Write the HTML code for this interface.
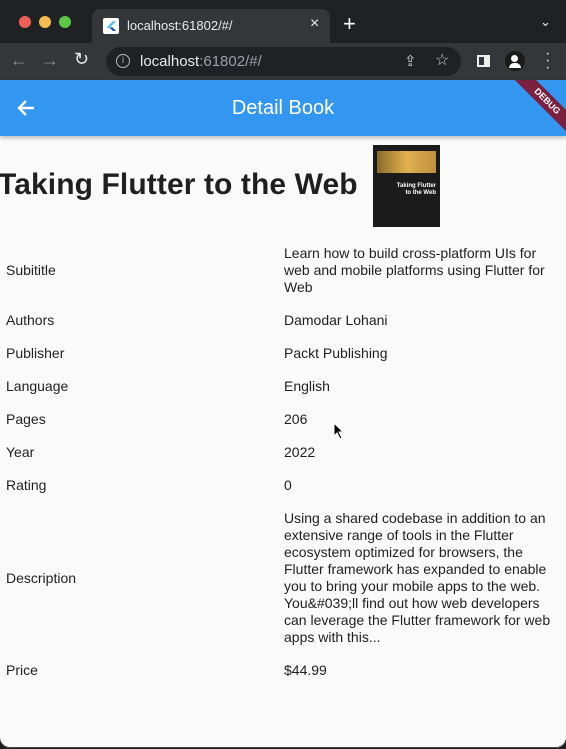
<!DOCTYPE html>
<html><head><meta charset="utf-8"><style>
*{margin:0;padding:0;box-sizing:border-box}
body{width:566px;height:749px;background:#1e1e1e;font-family:"Liberation Sans",sans-serif;position:relative;overflow:hidden}
.a{position:absolute}
.win{position:absolute;left:0;top:0;width:566px;height:748px;background:#fafafa;border-radius:0 0 10px 10px;overflow:hidden;box-shadow:inset 0 -1px 0 #444}
.t{position:absolute;font-size:14px;color:#1f1f1f;line-height:17px}
</style></head><body>
<div class="win">
<div class="a" style="left:0;top:0;width:566px;height:43px;background:#202124"></div>
<div class="a" style="left:19px;top:16px;width:12px;height:12px;border-radius:6px;background:#ee5f57"></div>
<div class="a" style="left:39px;top:16px;width:12px;height:12px;border-radius:6px;background:#f5bd4f"></div>
<div class="a" style="left:59px;top:16px;width:12px;height:12px;border-radius:6px;background:#5ec747"></div>
<div class="a" style="left:92px;top:9px;width:238px;height:36px;background:#35363a;border-radius:8px 8px 0 0"></div>
<div class="a" style="left:103px;top:18px;width:16px;height:16px;background:#fff;border-radius:2px"><svg width="16" height="16"><path d="M10 3L4 9l2 2 7-8z" fill="#4fc3f7"/><path d="M7 10l3 3h3l-4-4z" fill="#0d47a1"/></svg></div>
<div class="a" style="left:127px;top:18px;color:#e8eaed;font-size:13px">localhost:61802/#/</div>
<div class="a" style="left:310px;top:15px;color:#e8eaed;font-size:16px">×</div>
<div class="a" style="left:343px;top:11px;color:#fff;font-size:22px">+</div>
<div class="a" style="left:540px;top:14px;color:#e8eaed;font-size:13px">⌄</div>
<div class="a" style="left:0;top:43px;width:566px;height:37px;background:#35363a"></div>
<div class="a" style="left:10px;top:50px;color:#8a8b8d;font-size:18px">←</div>
<div class="a" style="left:41px;top:50px;color:#8a8b8d;font-size:18px">→</div>
<div class="a" style="left:74px;top:49px;color:#e8eaed;font-size:18px">↻</div>
<div class="a" style="left:106px;top:47px;width:355px;height:29px;background:#202124;border-radius:15px"></div>
<div class="a" style="left:116px;top:54px;width:14px;height:14px;border:1.5px solid #bbb;border-radius:7px;color:#bbb;font-size:9px;text-align:center;line-height:11px">i</div>
<div class="a" style="left:140px;top:53px;font-size:15px;color:#e8eaed">localhost<span style="color:#9aa0a6">:61802/#/</span></div>
<div class="a" style="left:404px;top:52px;color:#ccc;font-size:15px">⇪</div>
<div class="a" style="left:435px;top:50px;color:#ccc;font-size:16px">☆</div>
<div class="a" style="left:477px;top:55px;width:13px;height:12px;border:2px solid #eee;border-right-width:6px"></div>
<div class="a" style="left:505px;top:51px;width:20px;height:20px;border-radius:10px;background:#1a1a1a"><div class="a" style="left:6px;top:4px;width:7px;height:7px;border-radius:4px;background:#fff"></div><div class="a" style="left:4px;top:12px;width:12px;height:5px;border-radius:5px 5px 0 0;background:#fff"></div></div>
<div class="a" style="left:545px;top:50px;color:#ddd;font-size:16px;line-height:7px">·<br>·<br>·</div>
<div class="a" style="left:0;top:80px;width:566px;height:56px;background:#3396f1;box-shadow:0 2px 4px rgba(0,0,0,.25);overflow:hidden">
<div class="a" style="left:502px;top:14px;width:90px;height:15px;background:#7a1f3d;transform:rotate(45deg);color:#fff;font-size:9px;font-weight:bold;text-align:center;line-height:15px">DEBUG</div>
</div>
<svg class="a" style="left:16px;top:98px" width="20" height="20"><path d="M18 10H3M10 3L3 10l7 7" stroke="#fff" stroke-width="2.4" fill="none"/></svg>
<div class="a" style="left:0;width:566px;top:97px;text-align:center;color:#fff;font-size:20px">Detail Book</div>
<div class="a" style="left:-2px;top:168px;font-size:30px;font-weight:bold;color:#1f1f1f;letter-spacing:0.1px">Taking Flutter to the Web</div>
<div class="a" style="left:373px;top:145px;width:67px;height:82px;background:#1b1b1b">
<div class="a" style="left:4px;top:6px;width:59px;height:22px;background:linear-gradient(90deg,#8a6a2a,#e0b050,#c09040)"></div>
<div class="a" style="left:18px;top:38px;color:#fff;font-size:6px;font-weight:bold;line-height:7px;text-align:right;width:45px">Taking Flutter<br>to the Web</div>
</div>
<div class="t" style="left:6px;top:262px">Subititle</div>
<div class="t" style="left:284px;top:245px">Learn how to build cross-platform UIs for<br>web and mobile platforms using Flutter for<br>Web</div>
<div class="t" style="left:6px;top:312px">Authors</div><div class="t" style="left:284px;top:312px">Damodar Lohani</div>
<div class="t" style="left:6px;top:345px">Publisher</div><div class="t" style="left:284px;top:345px">Packt Publishing</div>
<div class="t" style="left:6px;top:378px">Language</div><div class="t" style="left:284px;top:378px">English</div>
<div class="t" style="left:6px;top:411px">Pages</div><div class="t" style="left:284px;top:411px">206</div>
<div class="t" style="left:6px;top:444px">Year</div><div class="t" style="left:284px;top:444px">2022</div>
<div class="t" style="left:6px;top:477px">Rating</div><div class="t" style="left:284px;top:477px">0</div>
<div class="t" style="left:6px;top:570px">Description</div>
<div class="t" style="left:284px;top:510px">Using a shared codebase in addition to an<br>extensive range of tools in the Flutter<br>ecosystem optimized for browsers, the<br>Flutter framework has expanded to enable<br>you to bring your mobile apps to the web.<br>You&amp;#039;ll find out how web developers<br>can leverage the Flutter framework for web<br>apps with this...</div>
<div class="t" style="left:6px;top:662px">Price</div><div class="t" style="left:284px;top:662px">$44.99</div>
<svg class="a" style="left:333px;top:422px" width="12" height="18"><path d="M1 1v13l3-3 3 6 2-1-3-6h4z" fill="#000" stroke="#fff" stroke-width="1"/></svg>
</div>
</body></html>
